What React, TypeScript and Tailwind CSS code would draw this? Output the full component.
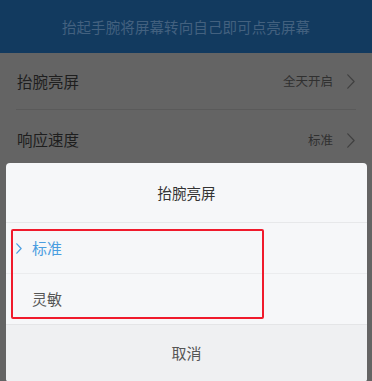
import React from "react";

const font = { fontFamily: '"Noto Sans CJK SC", "Noto Sans", sans-serif' };

function Chevron({ color, w = 7, h = 14, sw = 1.3 }: { color: string; w?: number; h?: number; sw?: number }) {
  return (
    <svg width={w} height={h} viewBox={`0 0 ${w} ${h}`} fill="none">
      <path d={`M0.8 0.8 L${w - 0.9} ${h / 2} L0.8 ${h - 0.8}`} stroke={color} strokeWidth={sw} strokeLinecap="round" strokeLinejoin="round" />
    </svg>
  );
}

export default function App() {
  return (
    <div className="relative w-[372px] h-[381px] overflow-hidden bg-[#646464]" style={font}>
      <div className="h-[53px] bg-[#123a5f] flex items-center justify-center">
        <span className="text-[14.5px] text-[#43617f] tracking-[0.1px]">抬起手腕将屏幕转向自己即可点亮屏幕</span>
      </div>
      <div className="px-[16px]">
        <div className="h-[57px] flex items-center justify-between border-b border-[#5a5a5a]">
          <span className="text-[15.5px] text-[#1e1e1e] pl-[1px] mt-[1px]">抬腕亮屏</span>
          <div className="flex items-center gap-[14px] pr-[1px]">
            <span className="text-[12.5px] text-[#303030]">全天开启</span>
            <Chevron color="#404040" w={8} h={15} sw={1.2} />
          </div>
        </div>
        <div className="h-[60px] flex items-center justify-between">
          <span className="text-[15.5px] text-[#1e1e1e] pl-[1px]">响应速度</span>
          <div className="flex items-center gap-[14px] pr-[1px]">
            <span className="text-[12.5px] text-[#303030]">标准</span>
            <Chevron color="#404040" w={8} h={15} sw={1.2} />
          </div>
        </div>
      </div>

      <div className="absolute left-[6px] top-[163px] w-[361px] rounded-[4px] overflow-hidden bg-[#f6f7f9]">
        <div className="h-[60px] flex items-center justify-center border-b border-[#e7e8ea]">
          <span className="text-[14.5px] text-[#333333]">抬腕亮屏</span>
        </div>
        <div className="h-[51px] flex items-center border-b border-[#ebecee] pl-[10px]">
          <Chevron color="#4a9de0" w={6} h={11} sw={1.2} />
          <span className="ml-[10px] text-[15px] text-[#4a9de0]">标准</span>
        </div>
        <div className="h-[51px] flex items-center border-b border-[#e4e5e7] pl-[26px]">
          <span className="text-[15px] text-[#555555]">灵敏</span>
        </div>
        <div className="h-[57px] flex items-center justify-center bg-[#eff0f2]">
          <span className="text-[15px] text-[#555555]">取消</span>
        </div>
      </div>

      <div className="absolute left-[11px] top-[229px] w-[253px] h-[90px] border-2 border-[#f01a2c] rounded-[2px]" />
    </div>
  );
}
